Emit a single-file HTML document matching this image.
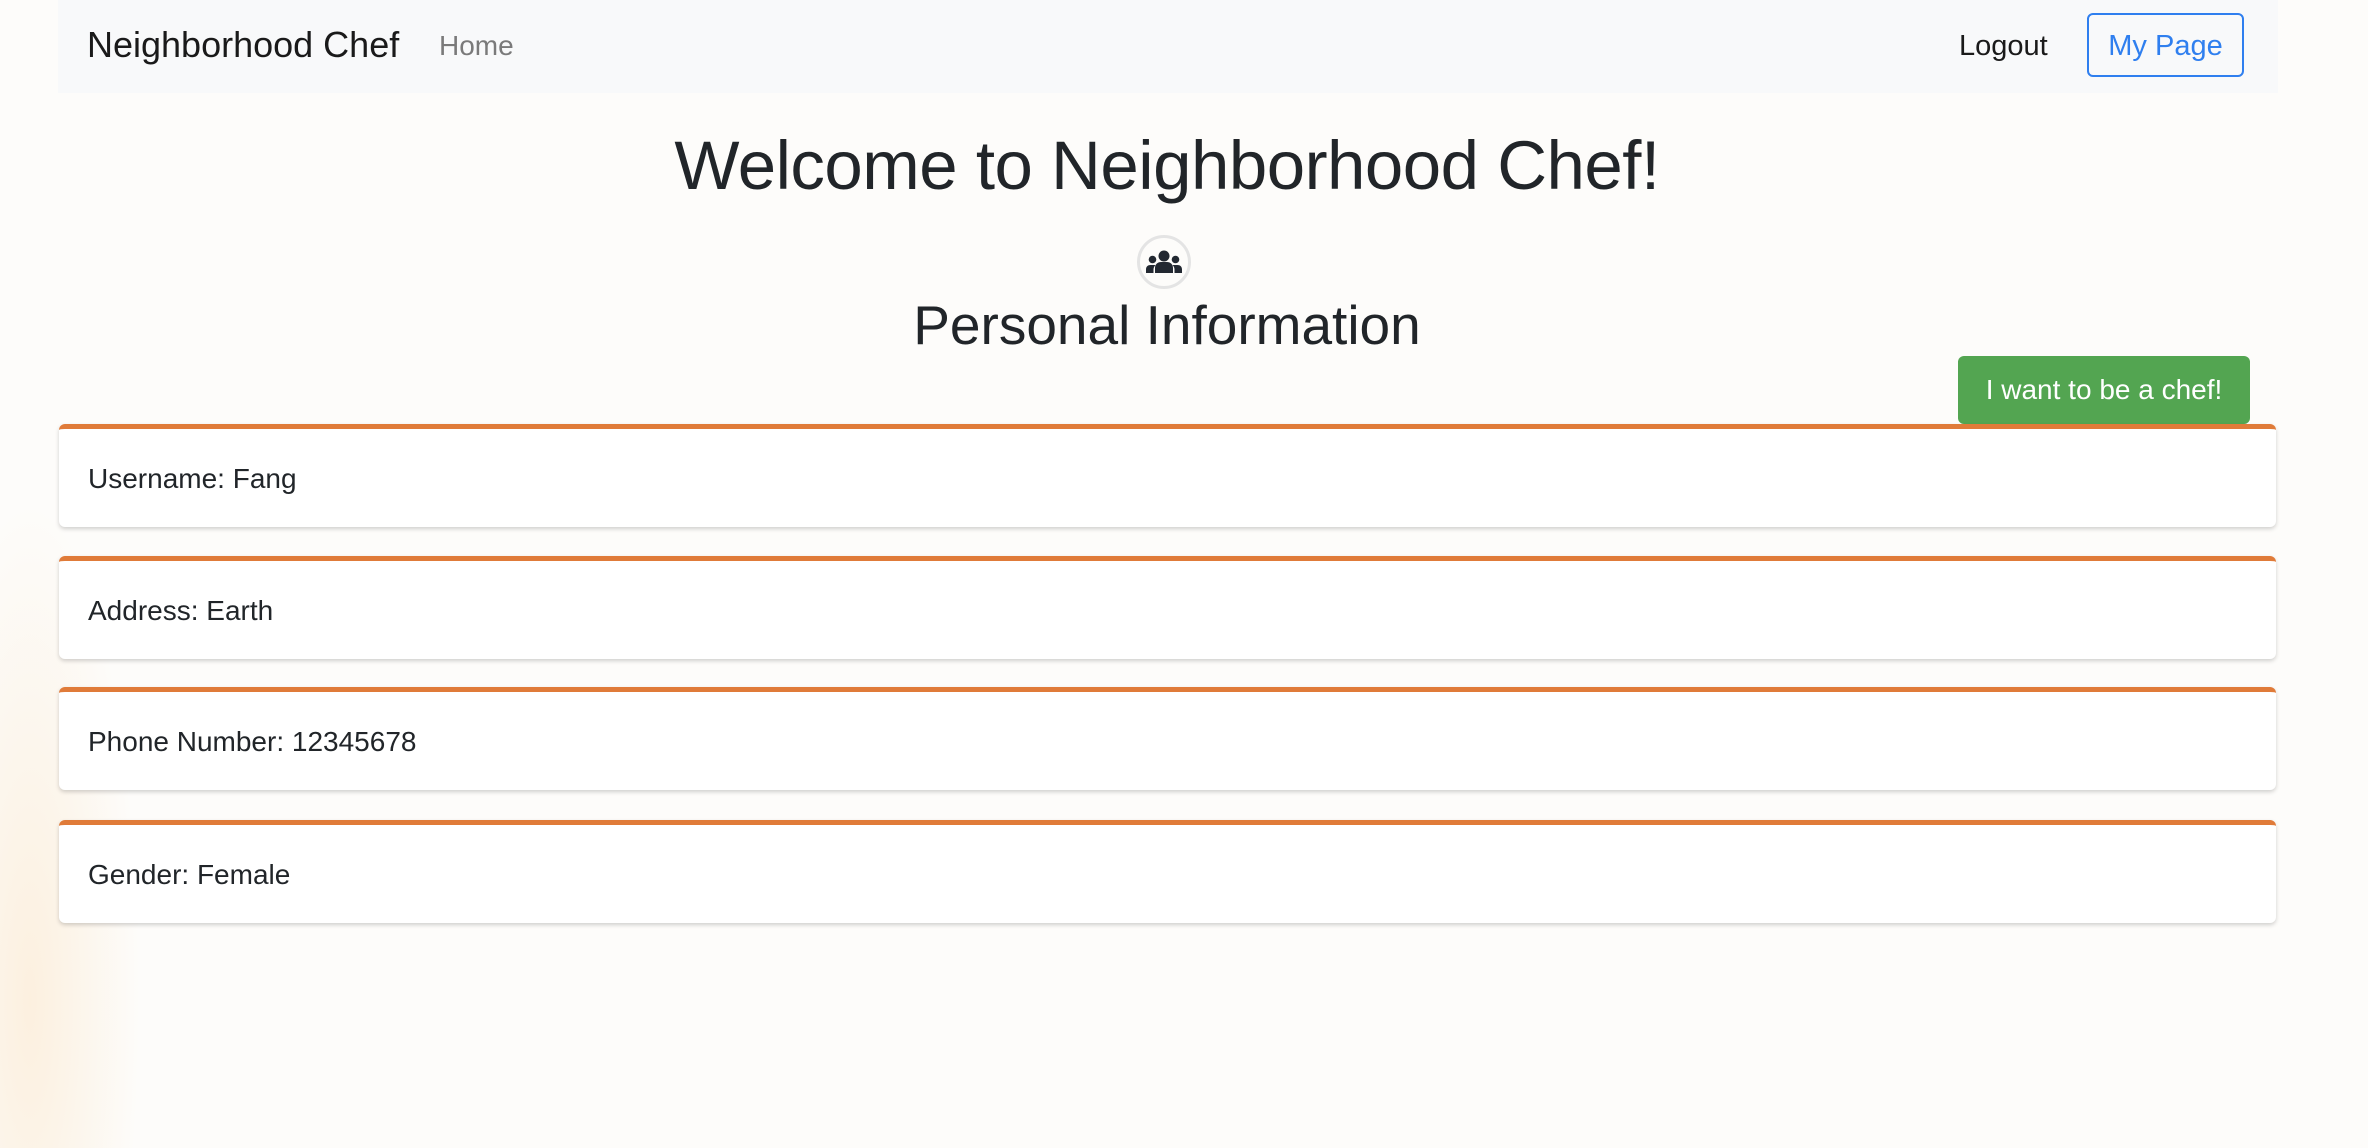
<!DOCTYPE html>
<html><head><meta charset="utf-8"><style>
*{margin:0;padding:0;box-sizing:border-box}
html,body{width:2368px;height:1148px;overflow:hidden}
body{font-family:"Liberation Sans",Arial,sans-serif;color:#212529;position:relative;
background:radial-gradient(ellipse 110px 500px at 30px 1000px,rgba(250,225,190,.45),rgba(253,252,250,0) 100%),#fdfcfa}
.nav{position:absolute;left:58px;top:0;width:2220px;height:93px;background:#f8f9fa}
.abs{position:absolute;white-space:nowrap}
.card{position:absolute;left:59px;width:2217px;height:103px;background:#fff;border-top:5px solid #e07b39;border-radius:6px;box-shadow:0 2px 4px rgba(0,0,0,.18)}
.card span{position:absolute;left:29px;top:34px;font-size:28px;color:#212529}
</style></head><body>
<div class="nav"></div>
<div class="abs" style="left:87px;top:24px;font-size:36px;color:#1a1a1a">Neighborhood Chef</div>
<div class="abs" style="left:439px;top:30px;font-size:28px;color:#7a7a7a">Home</div>
<div class="abs" style="left:1959px;top:30px;font-size:29px;color:#1a1a1a">Logout</div>
<div class="abs" style="left:2087px;top:13px;width:157px;height:64px;border:2px solid #2f7fef;border-radius:6px;color:#2f7fef;font-size:29px;text-align:center;line-height:62px">My Page</div>
<div class="abs" style="left:0;width:2334px;top:122px;text-align:center;font-size:69px;line-height:88px;color:#212529;letter-spacing:-0.5px">Welcome to Neighborhood Chef!</div>
<div class="abs" style="left:1137px;top:235px;width:54px;height:54px;border:3px solid #e4e4e4;border-radius:50%;background:#fdfcfa">
<svg width="36" height="24" viewBox="0 0 36 24" style="position:absolute;left:6px;top:12px" fill="#222831">
<circle cx="18" cy="6" r="5.5"/><path d="M9 23v-5c0-4 3-6 6-6h6c3 0 6 2 6 6v5z"/>
<circle cx="6.5" cy="9.5" r="3.8"/><path d="M0 23v-3.5c0-3 2-4.5 4.5-4.5h5c-1 1-2 2.5-2 4.5V23z"/>
<circle cx="29.5" cy="9.5" r="3.8"/><path d="M36 23v-3.5c0-3-2-4.5-4.5-4.5h-5c1 1 2 2.5 2 4.5V23z"/>
</svg></div>
<div class="abs" style="left:0;width:2334px;top:292px;text-align:center;font-size:55px;line-height:66px;color:#212529">Personal Information</div>
<div class="abs" style="left:1958px;top:356px;width:292px;height:68px;background:#53a551;border-radius:6px;color:#fff;font-size:28px;text-align:center;line-height:68px">I want to be a chef!</div>
<div class="card" style="top:424px"><span>Username: Fang</span></div>
<div class="card" style="top:556px"><span>Address: Earth</span></div>
<div class="card" style="top:687px"><span>Phone Number: 12345678</span></div>
<div class="card" style="top:820px"><span>Gender: Female</span></div>
</body></html>
